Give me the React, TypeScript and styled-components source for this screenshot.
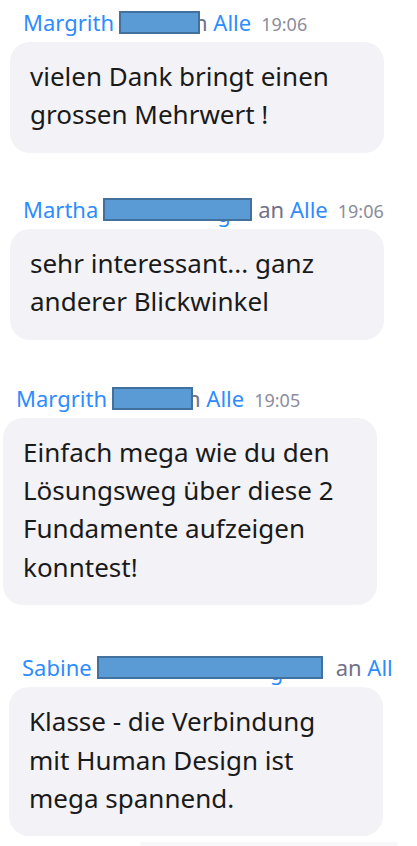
import styled, { createGlobalStyle } from 'styled-components';

const GlobalStyle = createGlobalStyle`
  html,
  body {
    margin: 0;
    padding: 0;
    background: #ffffff;
    overflow: hidden;
  }

  body {
    font-family: 'Noto Sans', 'Open Sans', Arial, sans-serif;
    -webkit-font-smoothing: antialiased;
  }
`;

type ChatMessage = {
  name: string;
  hidden: number;
  peek?: number; // where a descender of the covered text shows below the box
  tail: string;
  tailGap: number;
  target: string;
  time?: string;
  lines: string[];
  shift: number;
  top: number;
};

const messages: ChatMessage[] = [
  {
    name: 'Margrith',
    hidden: 81,
    tail: 'n',
    tailGap: -6,
    target: 'Alle',
    time: '19:06',
    lines: ['vielen Dank bringt einen', 'grossen Mehrwert !'],
    shift: 10,
    top: 8,
  },
  {
    name: 'Martha',
    hidden: 149,
    peek: 114,
    tail: 'an',
    tailGap: 6,
    target: 'Alle',
    time: '19:06',
    lines: ['sehr interessant... ganz', 'anderer Blickwinkel'],
    shift: 10,
    top: 42,
  },
  {
    name: 'Margrith',
    hidden: 81,
    tail: 'n',
    tailGap: -6,
    target: 'Alle',
    time: '19:05',
    lines: ['Einfach mega wie du den', 'Lösungsweg über diese 2', 'Fundamente aufzeigen', 'konntest!'],
    shift: 3,
    top: 44,
  },
  {
    name: 'Sabine',
    hidden: 226,
    peek: 173,
    tail: 'an',
    tailGap: 13,
    target: 'All',
    lines: ['Klasse - die Verbindung', 'mit Human Design ist', 'mega spannend.'],
    shift: 9,
    top: 48,
  },
];

const App = () => {
  return (
    <>
      <GlobalStyle />
      <ChatList>
        {messages.map((m, i) => (
          <Message key={i} $shift={m.shift} $top={m.top}>
            <Header>
              <Sender>{m.name}</Sender>
              <Redacted $width={m.hidden} $gap={m.tailGap}>
                {m.peek !== undefined && <Peek style={{ left: m.peek }}>g</Peek>}
                <Cover />
              </Redacted>
              <To>{m.tail}</To> <Sender>{m.target}</Sender>
              {m.time && <Time>{m.time}</Time>}
            </Header>
            <Bubble>
              {m.lines.map((l, j) => (
                <Line key={j}>{l}</Line>
              ))}
            </Bubble>
          </Message>
        ))}
        <NextBubble />
      </ChatList>
    </>
  );
};

export default App;

const ChatList = styled.div`
  display: flex;
  flex-direction: column;
  width: 417px;
  height: 846px;
`;

const Message = styled.div<{ $shift: number; $top: number }>`
  display: flex;
  flex-direction: column;
  margin-top: ${(p) => p.$top}px;
  margin-left: ${(p) => p.$shift}px;
`;

const Header = styled.div`
  height: 28px;
  padding-left: 13px;
  font-size: 22px;
  line-height: 28px;
  white-space: nowrap;
  overflow-x: clip;
`;

const Sender = styled.span`
  color: #2d8cff;
`;

const To = styled.span`
  color: #71718a;
`;

const Redacted = styled.span<{ $width: number; $gap: number }>`
  display: inline-block;
  position: relative;
  z-index: 1;
  width: ${(p) => p.$width}px;
  height: 23px;
  margin-left: 5px;
  margin-right: ${(p) => p.$gap}px;
  vertical-align: -3px;
`;

const Peek = styled.span`
  position: absolute;
  bottom: -6px;
  line-height: 28px;
  color: #2d8cff;
`;

const Cover = styled.span`
  position: absolute;
  inset: 0;
  box-sizing: border-box;
  background: #5b9bd5;
  border: 2px solid #41719c;
`;

const Time = styled.span`
  margin-left: 10px;
  font-size: 18px;
  color: #8c8c9c;
`;

const Bubble = styled.div`
  width: 374px;
  box-sizing: border-box;
  margin-top: 6px;
  padding: 15px 20px 19px;
  border-radius: 20px;
  background: #f2f2f7;
  color: #1a1a1a;
  font-size: 26px;
  line-height: 38.4px;
`;

const Line = styled.div`
  white-space: nowrap;
`;

const NextBubble = styled.div`
  height: 20px;
  width: 258px;
  margin-top: 6px;
  margin-left: 140px;
  border-radius: 10px;
  background: #f7f7fa;
`;
